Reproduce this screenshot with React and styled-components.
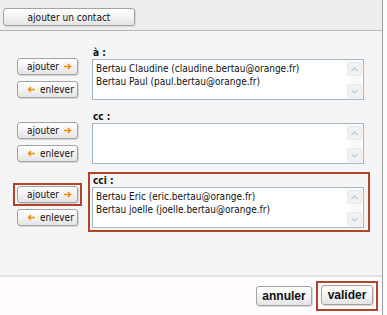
import React from 'react';
import styled, { createGlobalStyle } from 'styled-components';

const GlobalStyle = createGlobalStyle`
  html, body {
    margin: 0;
    padding: 0;
    background: #fbfbfb;
    font-family: "DejaVu Sans Condensed", "DejaVu Sans", sans-serif;
    font-size: 10px;
    color: #111;
  }
`

const Frame = styled.div`
  width: 382px;
  height: 315px;
  border-right: 1px solid #9c9c9c;
  display: flex;
  flex-direction: column;
  overflow: hidden;
`

const TopBar = styled.div`
  height: 31px;
  flex: none;
  background: #eeeeee;
  border-bottom: 1px solid #b4b4b4;
  padding: 8px 0 0 3px;
  box-sizing: border-box;
`

const Button = styled.button`
  font-family: ${({ $bold }) => ($bold ? '"Liberation Sans", Arial, sans-serif' : 'inherit')};
  font-size: ${({ $bold }) => ($bold ? '12px' : '10px')};
  font-weight: ${({ $bold }) => ($bold ? 'bold' : 'normal')};
  color: #111;
  width: ${({ $w }) => $w}px;
  height: ${({ $h }) => $h || 17}px;
  padding: 0 ${({ $pad }) => $pad || '0'};
  box-sizing: border-box;
  border: 1px solid #a3a3a3;
  border-radius: 3px;
  background: linear-gradient(#ffffff, #f2f2f2 55%, #e4e4e4);
  box-shadow: 1px 1px 0 #d6d6d6;
  display: flex;
  align-items: center;
  justify-content: ${({ $justify }) => $justify || 'center'};
  gap: 5px;
  white-space: nowrap;
  cursor: pointer;
  flex: none;
  svg {
    flex: none;
  }
`

const Panel = styled.div`
  height: 246px;
  flex: none;
  background: #f5f5f5;
  border-bottom: 2px solid #e1e1e1;
  box-sizing: border-box;
  padding-top: 13px;
  display: flex;
  flex-direction: column;
  gap: 4px;
`

const Section = styled.div`
  display: flex;
  align-items: flex-end;
  gap: 6px;
  padding-left: 13px;
`

const ButtonCol = styled.div`
  display: flex;
  flex-direction: column;
  gap: 3px;
  padding-bottom: 6px;
  & > button {
    margin-left: 4px;
  }
`

const Highlight = styled.div`
  border: 2px solid ${({ $on }) => ($on ? '#b0452a' : 'transparent')};
  padding: ${({ $pad }) => $pad};
`

const Label = styled.div`
  font-weight: bold;
  line-height: 13px;
  height: 13px;
  margin-left: 1px;
`

const ListBox = styled.div`
  width: 272px;
  height: 41px;
  box-sizing: border-box;
  border: 1px solid #a7b6c5;
  background: #fff;
  display: flex;
`

const Lines = styled.div`
  flex: 1;
  padding: 2px 3px;
  line-height: 13px;
  white-space: nowrap;
  overflow: hidden;
`

const ScrollBar = styled.div`
  width: 16px;
  flex: none;
  display: flex;
  flex-direction: column;
  justify-content: space-between;
  padding: 2px 0 1px;
  background: #f9fafb;
`

const ScrollBtn = styled.div`
  width: 15px;
  height: 14px;
  box-sizing: border-box;
  border: 1px solid #e7e9ec;
  border-radius: 2px;
  background: #f1f2f4;
  display: flex;
  align-items: center;
  justify-content: center;
`

const Footer = styled.div`
  flex: 1;
  background: #fffbff;
  display: flex;
  align-items: center;
  justify-content: flex-end;
  gap: 4px;
  padding: 0 4px 0 0;
`

const Arrow = ({ left }) => (
  <svg width="8" height="7" viewBox="0 0 8 7" style={left ? { transform: 'scaleX(-1)' } : undefined}>
    <path d="M0 3.5H6.5M4 1L6.5 3.5L4 6" fill="none" stroke="#ef8c0e" strokeWidth="1.4" />
  </svg>
)

const Chevron = ({ down }) => (
  <svg width="7" height="5" viewBox="0 0 7 5">
    <path d={down ? 'M0.5 1L3.5 4L6.5 1' : 'M0.5 4L3.5 1L6.5 4'} fill="none" stroke="#c3cad2" strokeWidth="1.3" />
  </svg>
)

const sections = [
  { label: 'à :', items: ['Bertau Claudine (claudine.bertau@orange.fr)', 'Bertau Paul (paul.bertau@orange.fr)'] },
  { label: 'cc :', items: [] },
  { label: 'cci :', items: ['Bertau Eric (eric.bertau@orange.fr)', 'Bertau joelle (joelle.bertau@orange.fr)'], marked: true },
]

const App = () => (
  <Frame>
    <GlobalStyle />
    <TopBar>
      <Button $w={132} $h={18}>ajouter un contact</Button>
    </TopBar>
    <Panel>
      {sections.map(s => (
        <Section key={s.label}>
          <ButtonCol>
            <Highlight $on={s.marked} $pad="1px 2px">
              <Button $w={61} $justify="space-between" $pad="6px 0 9px">
                ajouter <Arrow />
              </Button>
            </Highlight>
            <Button $w={61} $justify="flex-start" $pad="9px">
              <Arrow left /> enlever
            </Button>
          </ButtonCol>
          <Highlight $on={s.marked} $pad="0 4px 2px 2px">
            <Label>{s.label}</Label>
            <ListBox>
              <Lines>
                {s.items.map(i => <div key={i}>{i}</div>)}
              </Lines>
              <ScrollBar>
                <ScrollBtn><Chevron /></ScrollBtn>
                <ScrollBtn><Chevron down /></ScrollBtn>
              </ScrollBar>
            </ListBox>
          </Highlight>
        </Section>
      ))}
    </Panel>
    <Footer>
      <Button $w={56} $h={20} $bold>annuler</Button>
      <Highlight $on $pad="2px 3px 4px">
        <Button $w={52} $h={20} $bold>valider</Button>
      </Highlight>
    </Footer>
  </Frame>
)

export default App;
